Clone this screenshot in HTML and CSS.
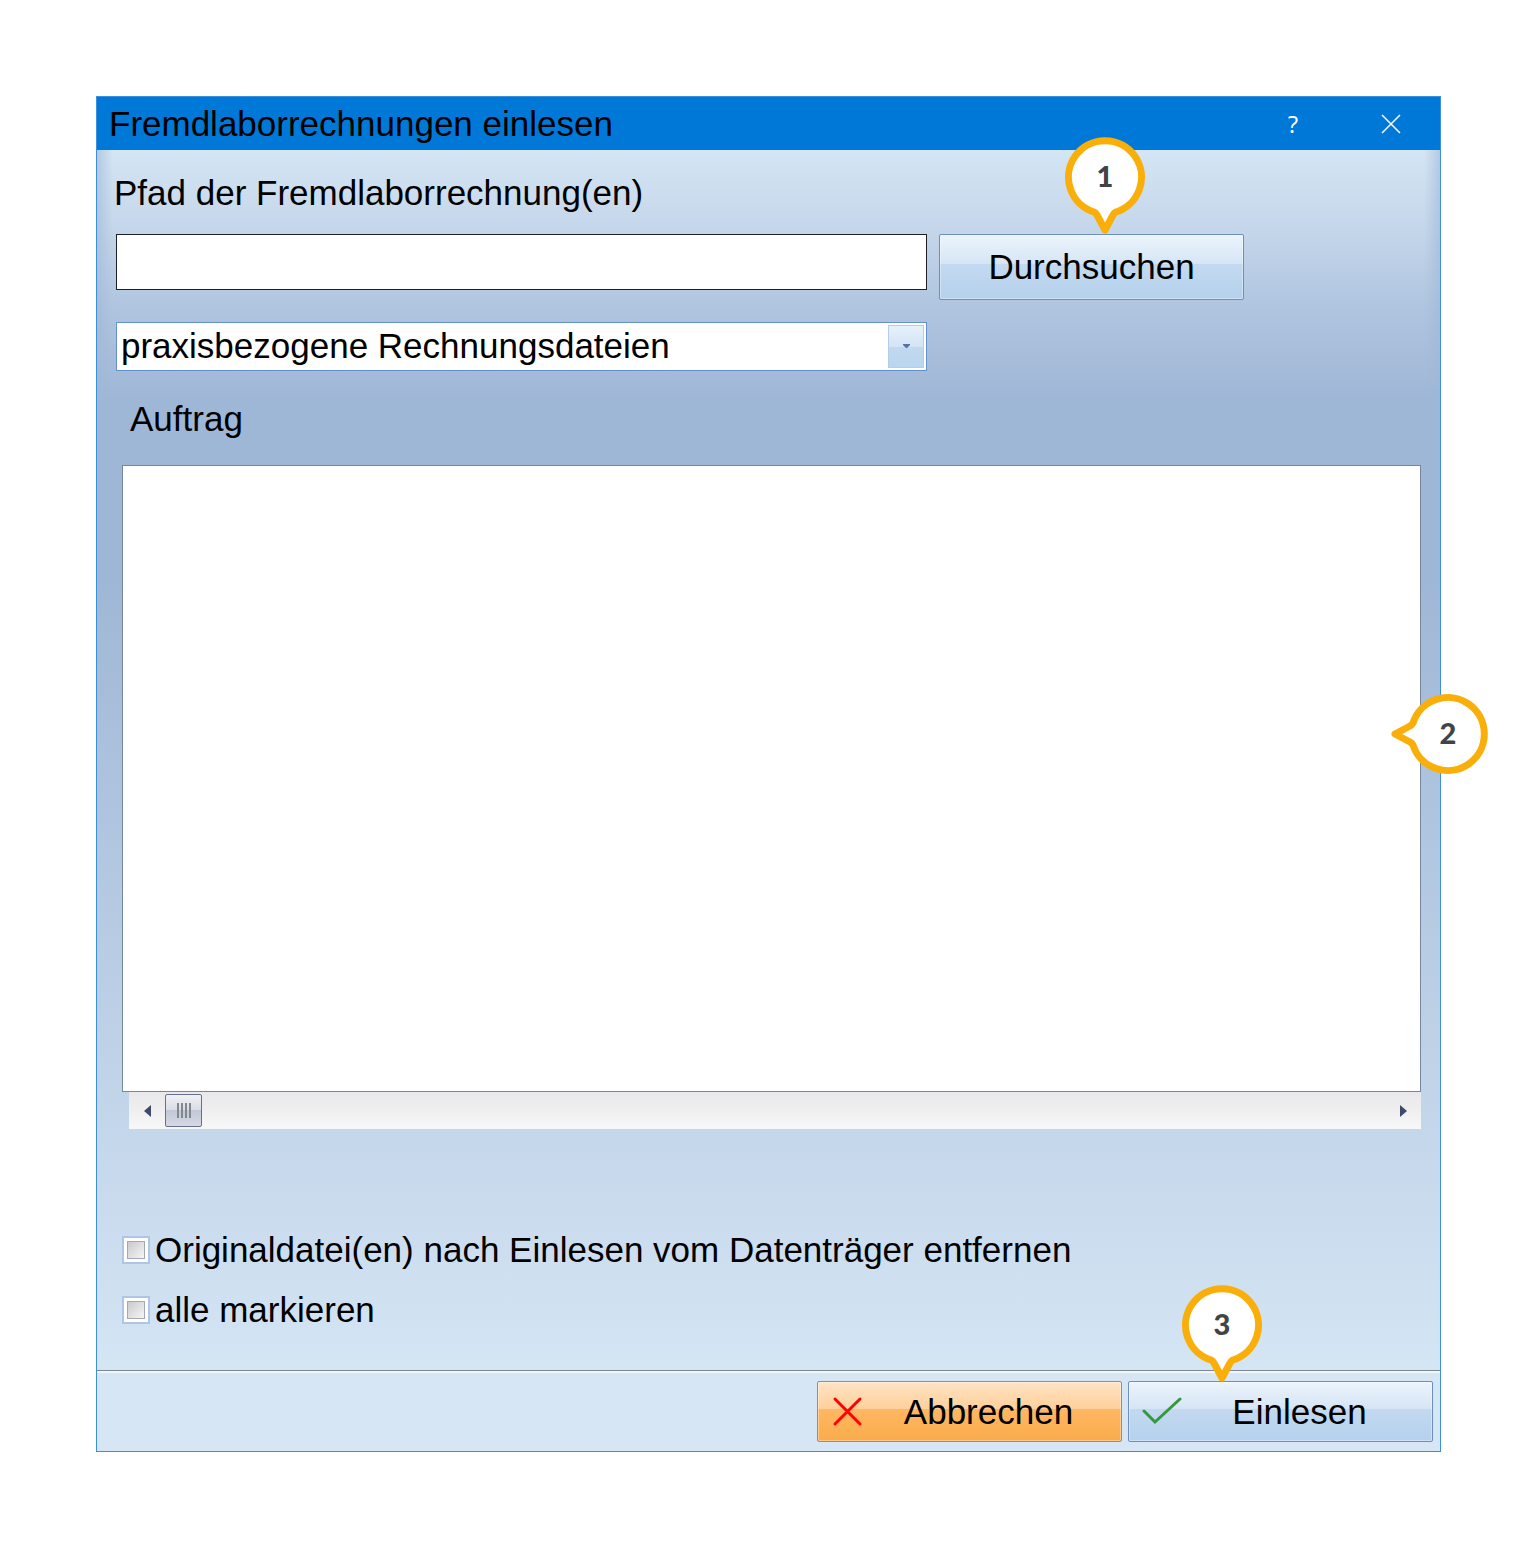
FILE: index.html
```html
<!DOCTYPE html>
<html lang="de">
<head>
    <meta charset="UTF-8">
    <meta name="viewport" content="width=device-width, initial-scale=1.0">
    <title>Fremdlaborrechnungen einlesen</title>
    <link rel="stylesheet" href="styles.css">
</head>
<body>
    <main class="window">
        <header class="titlebar">
            <h1>Fremdlaborrechnungen einlesen</h1>
            <button type="button" class="title-button help">?</button>
            <button type="button" class="title-button" aria-label="Schließen">
                <svg width="20" height="20" viewBox="0 0 20 20"><path d="M1 1L19 19M19 1L1 19" fill="none" stroke="#fff" stroke-width="1.5"/></svg>
            </button>
        </header>

        <form class="content">
            <div class="fields">
                <label class="path-label" for="path">Pfad der Fremdlaborrechnung(en)</label>
                <input type="text" id="path" class="path-input">
                <div class="anchor">
                    <button type="button" class="button browse">Durchsuchen</button>
                    <svg class="pin pin-top" width="82" height="98" viewBox="0 0 82 98">
                        <path d="M30 76A36.5 36.5 0 1 1 52 76Q50 77 49 79L41 94L33 79Q32 77 30 76Z"/>
                        <text x="41" y="51">1</text>
                    </svg>
                </div>
                <div class="select-box">
                    <select aria-label="Rechnungsdateien">
                        <option>praxisbezogene Rechnungsdateien</option>
                    </select>
                    <span class="select-arrow"><svg width="7" height="5" viewBox="0 0 7 5"><path d="M0 0H7V1L4 4H3L0 1Z" fill="#5871a3"/></svg></span>
                </div>
            </div>

            <h2>Auftrag</h2>
            <div class="anchor">
                <div class="list"></div>
                <svg class="pin pin-right" width="98" height="82" viewBox="0 0 98 82">
                    <path d="M22 30A36.5 36.5 0 1 1 22 52Q21 50 19 49L4 41L19 33Q21 32 22 30Z"/>
                    <text x="57" y="51">2</text>
                </svg>
            </div>
            <div class="scrollbar">
                <button type="button" class="scroll-button" aria-label="Nach links"><svg width="7" height="12" viewBox="0 0 7 12"><path d="M7 0V12L0 6Z" fill="#3d4a6b"/></svg></button>
                <div class="thumb"><svg width="16" height="15" viewBox="0 0 16 15"><path d="M2 0V15M6 0V15M10 0V15M14 0V15" stroke="#85878f" stroke-width="2"/></svg></div>
                <button type="button" class="scroll-button scroll-right" aria-label="Nach rechts"><svg width="7" height="12" viewBox="0 0 7 12"><path d="M0 0V12L7 6Z" fill="#3d4a6b"/></svg></button>
            </div>

            <div class="options">
                <label><input type="checkbox">Originaldatei(en) nach Einlesen vom Datenträger entfernen</label>
                <label><input type="checkbox">alle markieren</label>
            </div>
        </form>

        <footer class="actions">
            <button type="button" class="button cancel">
                <svg width="41" height="32" viewBox="0 0 41 32"><path d="M4 3L29 28M29 3L4 28" fill="none" stroke="#f00" stroke-width="3" stroke-linecap="round"/></svg>
                <span>Abbrechen</span>
            </button>
            <div class="anchor">
                <button type="button" class="button">
                    <svg width="41" height="32" viewBox="0 0 41 32"><path d="M2 15L13 26L38 3" fill="none" stroke="#34993b" stroke-width="3" stroke-linecap="round"/></svg>
                    <span>Einlesen</span>
                </button>
                <svg class="pin pin-bottom" width="82" height="98" viewBox="0 0 82 98">
                    <path d="M30 76A36.5 36.5 0 1 1 52 76Q50 77 49 79L41 94L33 79Q32 77 30 76Z"/>
                    <text x="41" y="51">3</text>
                </svg>
            </div>
        </footer>
    </main>
</body>
</html>
```

FILE: styles.css
```css
* {
    box-sizing: border-box;
}
body {
    margin: 0;
    padding: 96px;
    background-color: #fff;
    color: #000;
    font-family: "Liberation Sans", Arial, sans-serif;
    font-size: 35px;
    line-height: 42px;
}
button, input, select {
    margin: 0;
    font: inherit;
    color: inherit;
}
h1, h2 {
    margin: 0;
    font-size: 35px;
    font-weight: 400;
}
.window {
    border: 1px solid #3a90dc;
}
.titlebar {
    display: flex;
    align-items: center;
    height: 53px;
    padding-left: 12px;
    background-color: #0078d7;
}
.titlebar h1 {
    flex: 1;
}
.title-button {
    display: flex;
    align-items: center;
    justify-content: center;
    width: 98px;
    height: 53px;
    padding: 0;
    border: none;
    background: none;
    color: #fff;
}
.help {
    font-family: "Open Sans", sans-serif;
    font-size: 24px;
}
.content {
    padding: 22px 19px 39px;
    background:
        linear-gradient(to right, rgba(159, 183, 214, 0.6), rgba(159, 183, 214, 0) 16px) no-repeat top / 100% 430px,
        linear-gradient(to left, rgba(159, 183, 214, 0.6), rgba(159, 183, 214, 0) 16px) no-repeat top / 100% 430px,
        linear-gradient(#d4e5f4, #c3d5e9 85px, #afc4df 160px, #9fb7d6 250px, #9fb7d6 430px, #c4d6ea 975px, #d4e5f4);
}
.fields {
    display: grid;
    grid-template-columns: 1fr 305px;
    column-gap: 12px;
    padding-right: 177px;
}
.path-label {
    grid-column: 1 / 3;
    margin: 0 0 20px -2px;
}
.path-input {
    width: 100%;
    height: 56px;
    padding: 0 5px;
    border: 1px solid #1c2026;
    background-color: #fff;
}
.anchor {
    position: relative;
}
.button {
    display: flex;
    align-items: center;
    width: 305px;
    height: 61px;
    padding: 0 16px 0 13px;
    border: 1px solid #6b8fc3;
    border-radius: 2px;
    background: linear-gradient(#ecf4fc, #d6e5f5 45%, #c3d9f0 46%, #b5d1ee);
    box-shadow: inset 0 0 0 1px rgba(255, 255, 255, 0.35);
}
.button span {
    flex: 1;
    text-align: center;
}
.browse {
    justify-content: center;
    height: 66px;
    padding: 0;
}
.cancel {
    border-color: #8390a5;
    background: linear-gradient(#ffe4c4, #ffd09b 45%, #ffb762 46%, #faac4b);
}
.select-box {
    position: relative;
    margin-top: 22px;
}
.select-box select {
    display: block;
    width: 100%;
    height: 49px;
    padding: 0 44px 2px 4px;
    border: 1px solid #6390d0;
    border-radius: 0;
    background-color: #fff;
    appearance: none;
}
.select-arrow {
    position: absolute;
    top: 3px;
    right: 3px;
    display: flex;
    align-items: center;
    justify-content: center;
    width: 36px;
    height: 43px;
    border: 1px solid #b5cdea;
    background: linear-gradient(#e7f1fb, #d3e4f5 50%, #c1d9f0 51%, #bad5ef);
    pointer-events: none;
}
.content h2 {
    margin: 27px 0 25px 14px;
}
.list {
    height: 627px;
    margin-left: 6px;
    border: 1px solid #76869e;
    background-color: #fff;
}
.scrollbar {
    display: flex;
    align-items: center;
    height: 37px;
    margin-left: 13px;
    background: linear-gradient(#e9e9ec, #efefef 50%, #f8f8f8);
}
.scroll-button {
    display: flex;
    align-items: center;
    justify-content: center;
    width: 36px;
    height: 37px;
    padding: 0;
    border: none;
    background: none;
}
.scroll-right {
    margin-left: auto;
}
.thumb {
    display: flex;
    align-items: center;
    justify-content: center;
    width: 37px;
    height: 33px;
    border: 1px solid #666f8c;
    border-radius: 2px;
    background: linear-gradient(#f0f1f5, #dadde7 48%, #c2c8d7 50%, #d5d9e4);
}
.options {
    display: grid;
    gap: 18px;
    margin: 100px 0 0 6px;
}
.options label {
    display: flex;
    align-items: center;
    gap: 5px;
}
.options input {
    width: 28px;
    height: 28px;
    border: 2px solid #b0c5e6;
    background:
        linear-gradient(135deg, #c9cacc, #f5f5f5) center / 16px 16px no-repeat,
        linear-gradient(#a3a9b3, #a3a9b3) center / 18px 18px no-repeat,
        #fff;
    appearance: none;
}
.actions {
    display: flex;
    justify-content: flex-end;
    gap: 6px;
    padding: 10px 7px 9px;
    border-top: 1px solid #7c8792;
    background-color: #d7e6f5;
    box-shadow: inset 0 2px 0 #f0f7fc;
}
.pin {
    position: absolute;
    pointer-events: none;
}
.pin path {
    fill: #fff;
    stroke: #faae09;
    stroke-width: 7px;
    stroke-linejoin: round;
}
.pin text {
    fill: #434345;
    font-family: Lato, sans-serif;
    font-size: 29px;
    font-weight: 900;
    text-anchor: middle;
}
.pin-top {
    left: 125px;
    bottom: 66px;
}
.pin-right {
    right: -68px;
    top: 228px;
}
.pin-bottom {
    left: 53px;
    bottom: 60px;
}
```
